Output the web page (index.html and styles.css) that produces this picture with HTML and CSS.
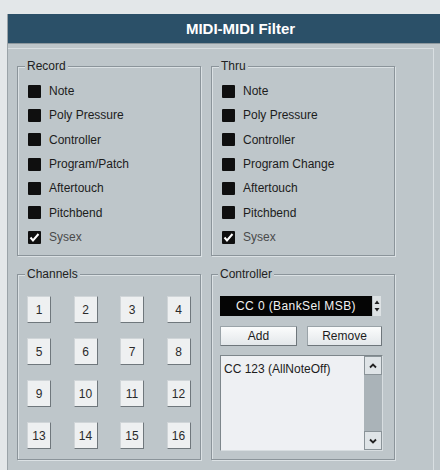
FILE: index.html
```html
<!DOCTYPE html>
<html>
<head>
<meta charset="utf-8">
<link rel="stylesheet" href="styles.css">
</head>
<body>
<div class="window">
  <div class="title">MIDI-MIDI Filter</div>
  <div class="content">
    <fieldset class="group">
      <legend>Record</legend>
      <div class="rows">
        <div class="row"><span class="cb"></span><span>Note</span></div>
        <div class="row"><span class="cb"></span><span>Poly Pressure</span></div>
        <div class="row"><span class="cb"></span><span>Controller</span></div>
        <div class="row"><span class="cb"></span><span>Program/Patch</span></div>
        <div class="row"><span class="cb"></span><span>Aftertouch</span></div>
        <div class="row"><span class="cb"></span><span>Pitchbend</span></div>
        <div class="row"><span class="cb"><svg viewBox="0 0 13 13" width="13" height="13"><polyline points="2.5,6.5 5,9.5 10.5,3" fill="none" stroke="#fff" stroke-width="2"/></svg></span><span class="dim">Sysex</span></div>
      </div>
    </fieldset>
    <fieldset class="group">
      <legend>Thru</legend>
      <div class="rows">
        <div class="row"><span class="cb"></span><span>Note</span></div>
        <div class="row"><span class="cb"></span><span>Poly Pressure</span></div>
        <div class="row"><span class="cb"></span><span>Controller</span></div>
        <div class="row"><span class="cb"></span><span>Program Change</span></div>
        <div class="row"><span class="cb"></span><span>Aftertouch</span></div>
        <div class="row"><span class="cb"></span><span>Pitchbend</span></div>
        <div class="row"><span class="cb"><svg viewBox="0 0 13 13" width="13" height="13"><polyline points="2.5,6.5 5,9.5 10.5,3" fill="none" stroke="#fff" stroke-width="2"/></svg></span><span class="dim">Sysex</span></div>
      </div>
    </fieldset>
    <fieldset class="group channels">
      <legend>Channels</legend>
      <div class="chgrid">
        <span class="ch">1</span><span class="ch">2</span><span class="ch">3</span><span class="ch">4</span>
        <span class="ch">5</span><span class="ch">6</span><span class="ch">7</span><span class="ch">8</span>
        <span class="ch">9</span><span class="ch">10</span><span class="ch">11</span><span class="ch">12</span>
        <span class="ch">13</span><span class="ch">14</span><span class="ch">15</span><span class="ch">16</span>
      </div>
    </fieldset>
    <fieldset class="group controller">
      <legend>Controller</legend>
      <div class="selrow">
        <div class="display">CC 0 (BankSel MSB)</div>
        <div class="spin">
          <svg viewBox="0 0 8 20" width="8" height="20"><polygon points="1.5,8 4,4.5 6.5,8" fill="#222"/><polygon points="1.5,12 4,15.5 6.5,12" fill="#222"/></svg>
        </div>
      </div>
      <div class="btnrow">
        <button class="btn add">Add</button>
        <button class="btn remove">Remove</button>
      </div>
      <div class="list">
        <div class="items">CC 123 (AllNoteOff)</div>
        <div class="scroll">
          <div class="arrow"><svg viewBox="0 0 10 10" width="10" height="10"><polyline points="2,6.5 5,3.5 8,6.5" fill="none" stroke="#222" stroke-width="1.8"/></svg></div>
          <div class="track"></div>
          <div class="arrow"><svg viewBox="0 0 10 10" width="10" height="10"><polyline points="2,3.5 5,6.5 8,3.5" fill="none" stroke="#222" stroke-width="1.8"/></svg></div>
        </div>
      </div>
    </fieldset>
  </div>
</div>
</body>
</html>
```
FILE: styles.css
```css
html, body {
  margin: 0;
  padding: 0;
}
body {
  background: #e3e7e9;
  font-family: "Liberation Sans", Arial, sans-serif;
  font-size: 12px;
  color: #1c1c1c;
  width: 440px;
  height: 470px;
  overflow: hidden;
}
.window {
  margin: 14px 0 0 7px;
  height: 456px;
  background: #bec6ca;
  border-left: 1px solid #9aa3a8;
}
.title {
  height: 29px;
  background: #2b5068;
  color: #fff;
  font-weight: bold;
  font-size: 15px;
  display: flex;
  align-items: center;
  justify-content: center;
  padding-left: 33px;
  border-bottom: 1px solid #8d989e;
}
.content {
  margin: 4px 6px 0 0;
  height: 421px;
  border-top: 1px solid #d9dfe2;
  border-right: 1px solid #d9dfe2;
  padding: 11px 0 0 9px;
  display: grid;
  grid-template-columns: 184px 184px;
  grid-template-rows: 196px 192px;
  column-gap: 10px;
  row-gap: 12px;
}
.group {
  margin: 0;
  padding: 6px 0 5px 10px;
  border: 1px solid #8b949a;
  box-shadow: 1px 1px 0 #dbe1e4, inset 1px 1px 0 #dbe1e4;
  min-width: 0;
  box-sizing: border-box;
}
.group legend {
  padding: 0 2px;
  margin-left: -3px;
  line-height: 13px;
  background: #bec6ca;
  color: #222;
}
.rows {
  display: flex;
  flex-direction: column;
}
.row {
  height: 24.33px;
  display: flex;
  align-items: center;
  gap: 8px;
}
.cb {
  width: 13px;
  height: 13px;
  background: #0f0f0f;
  border-radius: 1px;
  display: block;
  flex: none;
}
.cb svg {
  display: block;
}
.dim {
  color: #4a4a4a;
}
.channels {
  padding: 15px 0 0 9px;
}
.channels legend {
  margin-left: -2px;
}
.chgrid {
  display: grid;
  grid-template-columns: repeat(4, 24px);
  grid-auto-rows: 27px;
  column-gap: 22.5px;
  row-gap: 15px;
}
.ch {
  display: flex;
  align-items: center;
  justify-content: center;
  background: #eef0f1;
  border: 1px solid #d0d5d8;
  border-right-color: #6f777c;
  border-bottom-color: #6f777c;
  color: #2a2a2a;
  font-size: 12px;
  box-sizing: border-box;
}
.controller {
  padding: 15px 0 0 8px;
}
.controller legend {
  margin-left: -2px;
}
.selrow {
  display: flex;
  gap: 1px;
  height: 20px;
}
.display {
  width: 152px;
  height: 20px;
  background: #050505;
  color: #f2f2f2;
  font-size: 12px;
  letter-spacing: 0.4px;
  display: flex;
  align-items: center;
  justify-content: center;
}
.spin {
  width: 8px;
  height: 20px;
  background: #dde2e4;
}
.spin svg {
  display: block;
}
.btnrow {
  display: flex;
  gap: 10px;
  margin-top: 10px;
}
.btn {
  height: 20px;
  padding: 0;
  font-family: "Liberation Sans", Arial, sans-serif;
  font-size: 12px;
  color: #1c1c1c;
  background: linear-gradient(#fbfcfc, #e3e7ea);
  border: 1px solid #9aa3a8;
  border-right-color: #6e767b;
  border-bottom-color: #6e767b;
  border-radius: 1px;
}
.add {
  width: 77px;
}
.remove {
  width: 75px;
}
.list {
  margin-top: 9px;
  width: 163px;
  height: 96px;
  display: flex;
  background: #eef0f3;
  border: 1px solid #7d868b;
  border-right-color: #d7dde0;
  border-bottom-color: #d7dde0;
  box-sizing: border-box;
}
.items {
  flex: 1;
  padding: 6px 0 0 3px;
  font-size: 12px;
  color: #1c1c1c;
}
.scroll {
  width: 18px;
  display: flex;
  flex-direction: column;
  background: #aab3b8;
}
.arrow {
  height: 19px;
  display: flex;
  align-items: center;
  justify-content: center;
  background: #dfe4e7;
  border: 1px solid #8a9398;
  box-sizing: border-box;
}
.track {
  flex: 1;
}
```
